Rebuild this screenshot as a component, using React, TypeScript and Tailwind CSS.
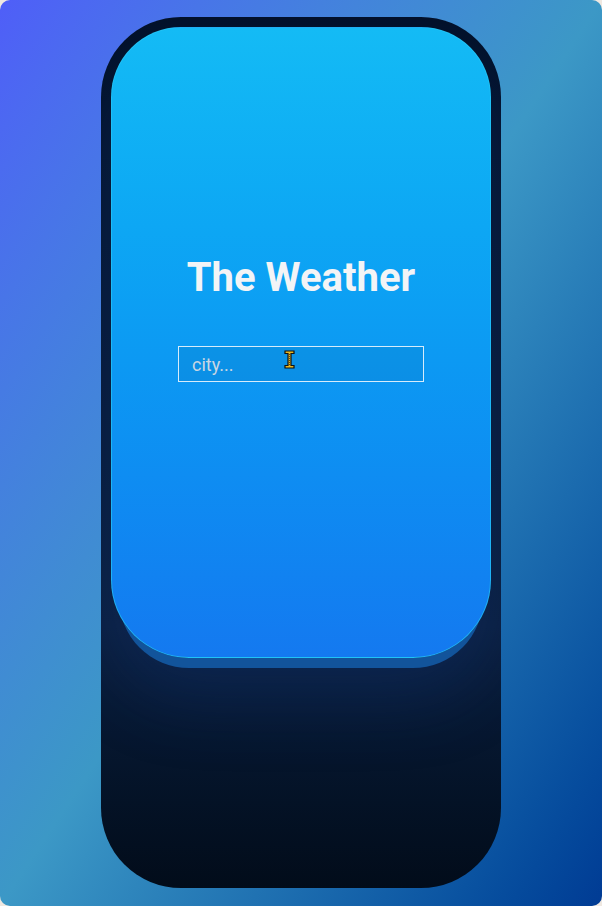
const Cursor = () => (
  <svg
    className="absolute left-[106px] top-[4px]"
    width="11"
    height="19"
    viewBox="0 0 11 19"
  >
    <path
      d="M1 1h9v2.5H7v12h3V18H1v-2.5h3v-12H1z"
      fill="#e8b824"
      stroke="#111"
      strokeWidth="1.2"
    />
    <path d="M5.5 4v11" stroke="#6a4a10" strokeWidth="1" strokeDasharray="1 1" />
  </svg>
);

const App = () => {
  return (
    <div className="w-[602px] h-[906px] bg-[#efe8e1]">
      <div className="w-full h-full rounded-[10px] bg-gradient-to-br from-[#4f5ef8] via-[#3c98c6] to-[#013b94] flex justify-center pt-[17px]">
        <div className="w-[400px] h-[871px] rounded-[80px] bg-gradient-to-b from-[#03112a] via-[#0b1f40] via-70% to-[#020c1a] p-[10px] overflow-hidden">
          <div className="relative h-[631px] rounded-t-[70px] rounded-b-[78px] border border-[#25c6f6]/70 bg-gradient-to-b from-[#14bbf5] to-[#1479f0] shadow-[0_18px_0_-8px_#12549b,0_40px_70px_rgba(20,60,130,0.3)] flex flex-col items-center pt-[226px]">
            <h1 className="font-['Roboto',sans-serif] font-bold text-[40px] leading-[47px] text-[#f3f4f6]">
              The Weather
            </h1>
            <div className="relative mt-[45px]">
              <input
                type="text"
                placeholder="city..."
                className="w-[246px] h-[36px] border border-[#d6ecfb] bg-black/5 px-[13px] font-['Roboto',sans-serif] text-[18px] text-white placeholder:text-[#c9d6e2] outline-none"
              />
              <Cursor />
            </div>
          </div>
        </div>
      </div>
    </div>
  );
};

export default App;
